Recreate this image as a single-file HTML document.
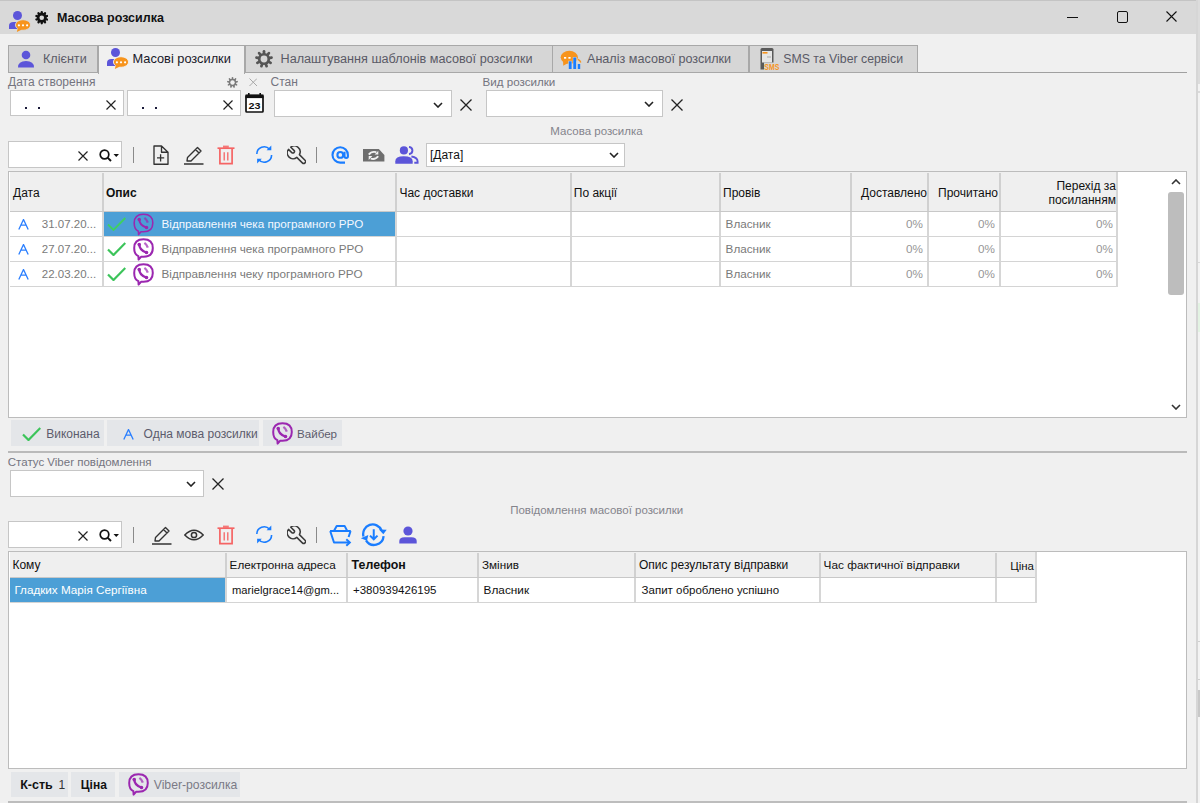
<!DOCTYPE html><html><head><meta charset="utf-8"><style>
*{box-sizing:border-box;margin:0;padding:0}
html,body{width:1200px;height:803px;overflow:hidden;background:#f0f0f0;font-family:"Liberation Sans", sans-serif;position:relative}
.t{position:absolute;white-space:nowrap;line-height:20px}
.r{position:absolute}
</style></head><body>
<div class="r" style="left:0px;top:0px;width:1196px;height:34px;background:#d9d9d9"></div>
<div class="r" style="left:0px;top:0px;width:1196px;height:1px;background:#c4c4c4"></div>
<div class="r" style="left:1198px;top:0px;width:2px;height:803px;background:#f3f3f3"></div>
<div class="r" style="left:1196px;top:0px;width:2px;height:803px;background:#d6d6d6"></div>
<div class="r" style="left:1198px;top:0px;width:2px;height:84px;background:#dcdcdc"></div>
<div class="r" style="left:1198px;top:91px;width:2px;height:2px;background:#dadada"></div>
<div class="r" style="left:1198px;top:262px;width:2px;height:1px;background:#d8d8d8"></div>
<div class="r" style="left:1198px;top:303px;width:2px;height:29px;background:#e3f3e3"></div>
<div class="r" style="left:1198px;top:641px;width:2px;height:1px;background:#d0d0d0"></div>
<div class="r" style="left:1198px;top:679px;width:2px;height:1px;background:#d0d0d0"></div>
<div class="r" style="left:1198px;top:690px;width:2px;height:27px;background:#c8c8c8"></div>
<svg class="r" style="left:9px;top:11px" width="23" height="22" viewBox="0 0 23 22"><circle cx="8.5" cy="4.5" r="4.5" fill="#5c55d9"/><path d="M0 18 L0 14.5 Q0 11 4.5 11 L9 11 L9 18 Z" fill="#5c55d9"/><ellipse cx="14" cy="14" rx="7.6" ry="5.3" fill="#f7941d" stroke="#d9d9d9" stroke-width="0.9"/><path d="M9 16.5 L7.8 21 L13 18.5 Z" fill="#f7941d"/><circle cx="9.9" cy="14.3" r="1.1" fill="#fff"/><circle cx="14" cy="14.3" r="1.1" fill="#fff"/><circle cx="18.1" cy="14.3" r="1.1" fill="#fff"/></svg>
<svg class="r" style="left:34.5px;top:11.2px" width="13.5" height="13.5" viewBox="0 0 13.5 13.5"><line x1="6.75" y1="6.75" x2="6.75" y2="1.15" stroke="#111" stroke-width="2.30" stroke-linecap="round"/><line x1="6.75" y1="6.75" x2="10.04" y2="2.22" stroke="#111" stroke-width="2.30" stroke-linecap="round"/><line x1="6.75" y1="6.75" x2="12.08" y2="5.02" stroke="#111" stroke-width="2.30" stroke-linecap="round"/><line x1="6.75" y1="6.75" x2="12.08" y2="8.48" stroke="#111" stroke-width="2.30" stroke-linecap="round"/><line x1="6.75" y1="6.75" x2="10.04" y2="11.28" stroke="#111" stroke-width="2.30" stroke-linecap="round"/><line x1="6.75" y1="6.75" x2="6.75" y2="12.35" stroke="#111" stroke-width="2.30" stroke-linecap="round"/><line x1="6.75" y1="6.75" x2="3.46" y2="11.28" stroke="#111" stroke-width="2.30" stroke-linecap="round"/><line x1="6.75" y1="6.75" x2="1.42" y2="8.48" stroke="#111" stroke-width="2.30" stroke-linecap="round"/><line x1="6.75" y1="6.75" x2="1.42" y2="5.02" stroke="#111" stroke-width="2.30" stroke-linecap="round"/><line x1="6.75" y1="6.75" x2="3.46" y2="2.22" stroke="#111" stroke-width="2.30" stroke-linecap="round"/><circle cx="6.75" cy="6.75" r="5.00" fill="#111"/><circle cx="6.75" cy="6.75" r="2.30" fill="#d9d9d9"/></svg>
<div class="t" style="left:57px;top:8.17px;font-size:12.5px;color:#111;font-weight:bold;">Масова розсилка</div>
<div class="r" style="left:1067px;top:17px;width:11px;height:1px;background:#111"></div>
<div class="r" style="left:1116.5px;top:11px;width:11.5px;height:11.5px;border:1.8px solid #111;border-radius:2px"></div>
<svg class="r" style="left:1166px;top:11px" width="11" height="11" viewBox="0 0 11 11"><path d="M0.5 0.5 L10.5 10.5 M10.5 0.5 L0.5 10.5" stroke="#111" stroke-width="1.1" fill="none"/></svg>
<div class="r" style="left:8px;top:72px;width:1179px;height:1px;background:#a0a0a0"></div>
<div class="r" style="left:8px;top:45px;width:90px;height:28px;background:#d6d6d6;border:1px solid #a8a8a8"></div>
<div class="r" style="left:98px;top:45px;width:147px;height:29px;background:#f0f0f0;border:1px solid #a8a8a8;border-bottom:none"></div>
<div class="r" style="left:245px;top:45px;width:308px;height:28px;background:#d6d6d6;border:1px solid #a8a8a8"></div>
<div class="r" style="left:552px;top:45px;width:197px;height:28px;background:#d6d6d6;border:1px solid #a8a8a8"></div>
<div class="r" style="left:749px;top:45px;width:169px;height:28px;background:#d6d6d6;border:1px solid #a8a8a8"></div>
<svg class="r" style="left:17px;top:50px" width="18" height="18" viewBox="0 0 18 18"><circle cx="9" cy="5" r="4.3" fill="#5c55d9"/><path d="M1 17.5 Q1 11 9 11 Q17 11 17 17.5 Z" fill="#5c55d9"/></svg>
<div class="t" style="left:43px;top:49.13px;font-size:12.6px;color:#5a5a66;font-weight:normal;">Клієнти</div>
<svg class="r" style="left:107px;top:48px" width="23" height="22" viewBox="0 0 23 22"><circle cx="8.5" cy="4.5" r="4.5" fill="#5c55d9"/><path d="M0 18 L0 14.5 Q0 11 4.5 11 L9 11 L9 18 Z" fill="#5c55d9"/><ellipse cx="14" cy="14" rx="7.6" ry="5.3" fill="#f7941d" stroke="#f0f0f0" stroke-width="0.9"/><path d="M9 16.5 L7.8 21 L13 18.5 Z" fill="#f7941d"/><circle cx="9.9" cy="14.3" r="1.1" fill="#fff"/><circle cx="14" cy="14.3" r="1.1" fill="#fff"/><circle cx="18.1" cy="14.3" r="1.1" fill="#fff"/></svg>
<div class="t" style="left:132.5px;top:49.06px;font-size:12.8px;color:#1a1a2a;font-weight:normal;">Масові розсилки</div>
<svg class="r" style="left:254.7px;top:49.6px" width="18" height="18" viewBox="0 0 18 18"><line x1="9.0" y1="9.0" x2="9.00" y2="1.35" stroke="#555" stroke-width="2.70" stroke-linecap="round"/><line x1="9.0" y1="9.0" x2="13.92" y2="3.14" stroke="#555" stroke-width="2.70" stroke-linecap="round"/><line x1="9.0" y1="9.0" x2="16.53" y2="7.67" stroke="#555" stroke-width="2.70" stroke-linecap="round"/><line x1="9.0" y1="9.0" x2="15.63" y2="12.82" stroke="#555" stroke-width="2.70" stroke-linecap="round"/><line x1="9.0" y1="9.0" x2="11.62" y2="16.19" stroke="#555" stroke-width="2.70" stroke-linecap="round"/><line x1="9.0" y1="9.0" x2="6.38" y2="16.19" stroke="#555" stroke-width="2.70" stroke-linecap="round"/><line x1="9.0" y1="9.0" x2="2.37" y2="12.83" stroke="#555" stroke-width="2.70" stroke-linecap="round"/><line x1="9.0" y1="9.0" x2="1.47" y2="7.67" stroke="#555" stroke-width="2.70" stroke-linecap="round"/><line x1="9.0" y1="9.0" x2="4.08" y2="3.14" stroke="#555" stroke-width="2.70" stroke-linecap="round"/><circle cx="9.0" cy="9.0" r="6.12" fill="#555"/><circle cx="9.0" cy="9.0" r="3.42" fill="#d6d6d6"/></svg>
<div class="t" style="left:280.5px;top:49.12px;font-size:12.65px;color:#5a5a66;font-weight:normal;">Налаштування шаблонів масової розсилки</div>
<div class="t" style="left:587px;top:49.13px;font-size:12.6px;color:#5a5a66;font-weight:normal;">Аналіз масової розсилки</div>
<div class="t" style="left:783.3px;top:49.24px;font-size:12.3px;color:#5a5a66;font-weight:normal;">SMS та Viber сервіси</div>
<svg class="r" style="left:560px;top:50px" width="22" height="20" viewBox="0 0 22 20"><ellipse cx="9.3" cy="7.3" rx="8.6" ry="6.5" fill="#f7941d"/><path d="M3 11 L3.3 15.8 L8 13 Z" fill="#f7941d"/><rect x="4" y="7" width="2.2" height="1.7" fill="#fff"/><rect x="8.4" y="7" width="2.2" height="1.7" fill="#fff"/><path d="M18 9.3 Q20.3 10.5 20.8 12.5" stroke="#f7941d" stroke-width="1.3" fill="none"/><rect x="8.3" y="10.8" width="3.8" height="8.7" fill="#d6d6d6"/><rect x="12.8" y="7" width="3.8" height="12.5" fill="#d6d6d6"/><rect x="8.8" y="11.3" width="2.8" height="7.7" fill="#1a7dff"/><rect x="13.3" y="7.5" width="2.8" height="11.5" fill="#1a7dff"/><rect x="17.8" y="14" width="2.4" height="5" fill="#1a7dff"/></svg>
<svg class="r" style="left:759px;top:47px" width="22" height="24" viewBox="0 0 22 24"><path d="M1.5 2.5 Q1.5 1 3 1 L13 1 Q14.5 1 14.5 2.5 L14.5 22.5 L1.5 22.5 Z" fill="#5a5a5a"/><rect x="3" y="4" width="10" height="11.5" fill="#e6e6e6"/><rect x="3.5" y="5" width="5" height="1.6" fill="#f7941d"/><rect x="8" y="9.5" width="4" height="1" fill="#aaa"/><rect x="5" y="15.5" width="16" height="8" fill="#d6d6d6"/><text x="5.3" y="23" font-family="Liberation Sans" font-weight="bold" font-size="9" fill="#f7941d" textLength="15" lengthAdjust="spacingAndGlyphs">SMS</text></svg>
<div class="t" style="left:8px;top:71.84px;font-size:12px;color:#74747f;font-weight:normal;">Дата створення</div>
<svg class="r" style="left:226.5px;top:76.5px" width="11" height="11" viewBox="0 0 11 11"><line x1="5.5" y1="5.5" x2="5.50" y2="0.83" stroke="#7a7a7a" stroke-width="1.65" stroke-linecap="round"/><line x1="5.5" y1="5.5" x2="8.51" y2="1.92" stroke="#7a7a7a" stroke-width="1.65" stroke-linecap="round"/><line x1="5.5" y1="5.5" x2="10.10" y2="4.69" stroke="#7a7a7a" stroke-width="1.65" stroke-linecap="round"/><line x1="5.5" y1="5.5" x2="9.55" y2="7.84" stroke="#7a7a7a" stroke-width="1.65" stroke-linecap="round"/><line x1="5.5" y1="5.5" x2="7.10" y2="9.89" stroke="#7a7a7a" stroke-width="1.65" stroke-linecap="round"/><line x1="5.5" y1="5.5" x2="3.90" y2="9.89" stroke="#7a7a7a" stroke-width="1.65" stroke-linecap="round"/><line x1="5.5" y1="5.5" x2="1.45" y2="7.84" stroke="#7a7a7a" stroke-width="1.65" stroke-linecap="round"/><line x1="5.5" y1="5.5" x2="0.90" y2="4.69" stroke="#7a7a7a" stroke-width="1.65" stroke-linecap="round"/><line x1="5.5" y1="5.5" x2="2.49" y2="1.92" stroke="#7a7a7a" stroke-width="1.65" stroke-linecap="round"/><circle cx="5.5" cy="5.5" r="3.74" fill="#7a7a7a"/><circle cx="5.5" cy="5.5" r="2.20" fill="#f0f0f0"/></svg>
<svg class="r" style="left:248.5px;top:78.3px" width="8.5" height="8.5" viewBox="0 0 8.5 8.5"><path d="M0.5 0.5 L8.0 8.0 M8.0 0.5 L0.5 8.0" stroke="#a8a8a8" stroke-width="1.0" fill="none"/></svg>
<div class="t" style="left:270.6px;top:71.84px;font-size:12px;color:#74747f;font-weight:normal;">Стан</div>
<div class="t" style="left:482.5px;top:71.98px;font-size:11.6px;color:#74747f;font-weight:normal;">Вид розсилки</div>
<div class="r" style="left:10px;top:90px;width:114px;height:26px;background:#fff;border:1px solid #c6c6c6"></div>
<div class="r" style="left:127px;top:90px;width:114px;height:26px;background:#fff;border:1px solid #c6c6c6"></div>
<div class="r" style="left:25px;top:107px;width:2px;height:2px;background:#1a1a3a"></div>
<div class="r" style="left:38px;top:107px;width:2px;height:2px;background:#1a1a3a"></div>
<div class="r" style="left:142px;top:107px;width:2px;height:2px;background:#1a1a3a"></div>
<div class="r" style="left:155px;top:107px;width:2px;height:2px;background:#1a1a3a"></div>
<svg class="r" style="left:106px;top:99.5px" width="10" height="10" viewBox="0 0 10 10"><path d="M0.5 0.5 L9.5 9.5 M9.5 0.5 L0.5 9.5" stroke="#222" stroke-width="1.2" fill="none"/></svg>
<svg class="r" style="left:223px;top:99.5px" width="10" height="10" viewBox="0 0 10 10"><path d="M0.5 0.5 L9.5 9.5 M9.5 0.5 L0.5 9.5" stroke="#222" stroke-width="1.2" fill="none"/></svg>
<svg class="r" style="left:245px;top:93px" width="19" height="20" viewBox="0 0 19 20"><rect x="1" y="2.5" width="17" height="16.5" rx="0.8" fill="#fff" stroke="#111" stroke-width="1.7"/><rect x="0.5" y="1.5" width="18" height="3.6" fill="#111"/><rect x="3" y="0" width="1.6" height="2" fill="#111"/><rect x="14.4" y="0" width="1.6" height="2" fill="#111"/><text x="9.6" y="16.2" font-family="Liberation Sans" font-weight="bold" font-size="9.6" text-anchor="middle" fill="#111" textLength="12" lengthAdjust="spacingAndGlyphs">23</text></svg>
<div class="r" style="left:274px;top:90px;width:178px;height:27px;background:#fff;border:1px solid #c6c6c6"></div>
<svg class="r" style="left:432.5px;top:101.5px" width="10" height="6" viewBox="0 0 10 6"><path d="M1 1 L5 5 L9 1" stroke="#222" stroke-width="1.6" fill="none"/></svg>
<svg class="r" style="left:460px;top:99px" width="12" height="12" viewBox="0 0 12 12"><path d="M0.5 0.5 L11.5 11.5 M11.5 0.5 L0.5 11.5" stroke="#222" stroke-width="1.3" fill="none"/></svg>
<div class="r" style="left:486px;top:90px;width:177px;height:27px;background:#fff;border:1px solid #c6c6c6"></div>
<svg class="r" style="left:644px;top:101px" width="10" height="6" viewBox="0 0 10 6"><path d="M1 1 L5 5 L9 1" stroke="#222" stroke-width="1.6" fill="none"/></svg>
<svg class="r" style="left:671px;top:99px" width="12" height="12" viewBox="0 0 12 12"><path d="M0.5 0.5 L11.5 11.5 M11.5 0.5 L0.5 11.5" stroke="#222" stroke-width="1.3" fill="none"/></svg>
<div class="t" style="left:296.5px;width:600px;text-align:center;top:121.02px;font-size:11.5px;color:#84848c;font-weight:normal;">Масова розсилка</div>
<div class="r" style="left:8px;top:141px;width:114px;height:27px;background:#fff;border:1px solid #c6c6c6"></div>
<svg class="r" style="left:78px;top:151px" width="10" height="10" viewBox="0 0 10 10"><path d="M0.5 0.5 L9.5 9.5 M9.5 0.5 L0.5 9.5" stroke="#222" stroke-width="1.2" fill="none"/></svg>
<svg class="r" style="left:99px;top:149px" width="21" height="13" viewBox="0 0 21 13"><circle cx="5.5" cy="5.5" r="4.3" stroke="#111" stroke-width="1.7" fill="none"/><path d="M8.6 8.6 L12 12" stroke="#111" stroke-width="1.9"/><path d="M14.5 5 L20 5 L17.25 8 Z" fill="#111"/></svg>
<div class="r" style="left:133px;top:147px;width:1px;height:16px;background:#8a8a8a"></div>
<svg class="r" style="left:153px;top:145px" width="16" height="20" viewBox="0 0 16 20"><path d="M1 1 L8.5 1 L15 7.2 L15 19.2 L1 19.2 Z M8.5 1 L8.5 7.2 L15 7.2" stroke="#333" stroke-width="1.35" fill="none" stroke-linejoin="round"/><path d="M7.6 9.3 L7.6 16.5 M4 12.9 L11.2 12.9" stroke="#333" stroke-width="1.3"/></svg>
<svg class="r" style="left:184px;top:145px" width="20" height="20" viewBox="0 0 20 20"><path d="M3 16 L3.5 12.5 L13.5 2.5 L17 6 L7 16 Z M11.5 4.5 L15 8" stroke="#333" stroke-width="1.4" fill="none" stroke-linejoin="round"/><path d="M0 19 L19.5 19" stroke="#333" stroke-width="1.5"/></svg>
<svg class="r" style="left:217px;top:145px" width="18" height="20" viewBox="0 0 18 20"><path d="M0.5 3.2 L17.5 3.2" stroke="#f56464" stroke-width="1.7"/><rect x="6" y="0.6" width="5.8" height="2.2" fill="#f56464" opacity="0.85"/><path d="M2.9 4 L2.9 18.6 L15.1 18.6 L15.1 4" stroke="#f56464" stroke-width="1.7" fill="none"/><path d="M7.2 7.2 L7.2 15.5 M10.8 7.2 L10.8 15.5" stroke="#f56464" stroke-width="1.3"/></svg>
<svg class="r" style="left:255px;top:145px" width="19" height="19" viewBox="0 0 19 19"><path d="M1.8 9 A7.3 7.3 0 0 1 14.6 4.3" stroke="#1a7dff" stroke-width="1.6" fill="none"/><path d="M16.6 10 A7.3 7.3 0 0 1 3.8 14.7" stroke="#1a7dff" stroke-width="1.6" fill="none"/><path d="M11.6 5.3 L16.3 5.3 L16.3 0.6 Z" fill="#1a7dff"/><path d="M6.8 13.7 L2.1 13.7 L2.1 18.4 Z" fill="#1a7dff"/></svg>
<svg class="r" style="left:286.5px;top:145.5px" width="19" height="19" viewBox="0 0 19 19"><path d="M3.8 1.2 L7 4.4 A1.5 1.5 0 0 1 4.8 6.6 L1.5 3.4 A5.8 5.8 0 0 0 9.8 11.4 L15.3 16.9 A1.9 1.9 0 0 0 18 14.2 L12.4 8.6 A5.8 5.8 0 0 0 3.8 1.2 Z" stroke="#3a3a3a" stroke-width="1.5" fill="none" stroke-linejoin="round"/></svg>
<div class="r" style="left:316px;top:147px;width:1px;height:16px;background:#8a8a8a"></div>
<svg class="r" style="left:331px;top:146px" width="19" height="18" viewBox="0 0 19 18"><path d="M14 16.6 L9.2 16.6 A7.7 7.7 0 1 1 16.9 8.9 L16.9 10.3 A1.7 1.7 0 0 1 13.5 10.3 L13.5 5.8" stroke="#1a7dff" stroke-width="2.1" fill="none"/><circle cx="9.3" cy="8.9" r="2.9" stroke="#1a7dff" stroke-width="2.1" fill="none"/></svg>
<svg class="r" style="left:363px;top:148.5px" width="22" height="13" viewBox="0 0 22 13"><path d="M0 0 L15.8 0 L21.4 5.9 L21.4 12.5 L0 12.5 Z" fill="#6e6e6e"/><path d="M5.8 5.6 Q8.5 1.9 13.3 3.2 M15.2 7.2 Q12.5 10.9 7.7 9.6" stroke="#f2f2f2" stroke-width="1.9" fill="none"/><path d="M11.6 5.6 L15.3 1.7 L15.3 5.6 Z M9.4 7.1 L5.7 11 L5.7 7.1 Z" fill="#f2f2f2"/></svg>
<svg class="r" style="left:395px;top:146px" width="24" height="19" viewBox="0 0 24 19"><path d="M14 0.9 A4.1 3.7 0 0 1 14 8.2" stroke="#5c55d9" stroke-width="1.9" fill="none"/><path d="M16.4 10.5 Q22.6 11.5 22.6 15.5 L22.6 16.8 L19.3 16.8" stroke="#5c55d9" stroke-width="1.9" fill="none"/><circle cx="8.9" cy="4.4" r="4.1" fill="#5c55d9"/><path d="M0.3 17.7 L0.3 15.2 Q0.3 10.2 8.7 10.2 Q17.7 10.2 17.7 15.2 L17.7 17.7 Z" fill="#5c55d9"/></svg>
<div class="r" style="left:426px;top:143px;width:199px;height:24px;background:#fff;border:1px solid #c6c6c6"></div>
<div class="t" style="left:430px;top:145.34px;font-size:12px;color:#111;font-weight:normal;">[Дата]</div>
<svg class="r" style="left:608.5px;top:152px" width="10" height="6" viewBox="0 0 10 6"><path d="M1 1 L5 5 L9 1" stroke="#222" stroke-width="1.6" fill="none"/></svg>
<div class="r" style="left:8px;top:171px;width:1179px;height:247px;background:#fff;border:1px solid #bcbcbc"></div>
<div class="r" style="left:10px;top:172px;width:1108px;height:40px;background:#efefef"></div>
<div class="r" style="left:10px;top:211px;width:1108px;height:1px;background:#c8c8c8"></div>
<div class="r" style="left:10px;top:236px;width:1108px;height:1px;background:#d4d4d4"></div>
<div class="r" style="left:10px;top:261px;width:1108px;height:1px;background:#d4d4d4"></div>
<div class="r" style="left:10px;top:286px;width:1108px;height:1px;background:#d4d4d4"></div>
<div class="r" style="left:102px;top:173px;width:2px;height:38px;background:#d0d0d0"></div>
<div class="r" style="left:102px;top:212px;width:2px;height:74px;background:#d6d6d6"></div>
<div class="r" style="left:395px;top:173px;width:2px;height:38px;background:#d0d0d0"></div>
<div class="r" style="left:395px;top:212px;width:2px;height:74px;background:#d6d6d6"></div>
<div class="r" style="left:570px;top:173px;width:2px;height:38px;background:#d0d0d0"></div>
<div class="r" style="left:570px;top:212px;width:2px;height:74px;background:#d6d6d6"></div>
<div class="r" style="left:719px;top:173px;width:2px;height:38px;background:#d0d0d0"></div>
<div class="r" style="left:719px;top:212px;width:2px;height:74px;background:#d6d6d6"></div>
<div class="r" style="left:850px;top:173px;width:2px;height:38px;background:#d0d0d0"></div>
<div class="r" style="left:850px;top:212px;width:2px;height:74px;background:#d6d6d6"></div>
<div class="r" style="left:927px;top:173px;width:2px;height:38px;background:#d0d0d0"></div>
<div class="r" style="left:927px;top:212px;width:2px;height:74px;background:#d6d6d6"></div>
<div class="r" style="left:999px;top:173px;width:2px;height:38px;background:#d0d0d0"></div>
<div class="r" style="left:999px;top:212px;width:2px;height:74px;background:#d6d6d6"></div>
<div class="r" style="left:1116px;top:172px;width:2px;height:115px;background:#d6d6d6"></div>
<div class="r" style="left:104px;top:212px;width:291px;height:24px;background:#4c9fd6"></div>
<div class="t" style="left:13px;top:182.84px;font-size:12px;color:#111;font-weight:normal;">Дата</div>
<div class="t" style="left:106px;top:182.84px;font-size:12px;color:#111;font-weight:bold;">Опис</div>
<div class="t" style="left:399.4px;top:182.84px;font-size:12px;color:#111;font-weight:normal;">Час доставки</div>
<div class="t" style="left:573.75px;top:182.84px;font-size:12px;color:#111;font-weight:normal;">По акції</div>
<div class="t" style="left:723px;top:182.84px;font-size:12px;color:#111;font-weight:normal;">Провів</div>
<div class="t" style="right:273px;top:182.84px;font-size:12px;color:#111;font-weight:normal;">Доставлено</div>
<div class="t" style="right:202px;top:182.84px;font-size:12px;color:#111;font-weight:normal;">Прочитано</div>
<div class="t" style="right:84px;top:175.84px;font-size:12px;color:#111;font-weight:normal;">Перехід за</div>
<div class="t" style="right:84px;top:189.84px;font-size:12px;color:#111;font-weight:normal;">посиланням</div>
<svg class="r" style="left:18px;top:219px" width="11" height="11" viewBox="0 0 11 11"><path d="M0.8 10.5 L5.5 0.5 L10.2 10.5 M2.9 6.2 L8.1 6.2" stroke="#2a7fff" stroke-width="1.3" fill="none"/></svg>
<div class="t" style="left:41.8px;top:214.32px;font-size:11.5px;color:#7a7a7a;font-weight:normal;">31.07.20...</div>
<svg class="r" style="left:107px;top:217px" width="19" height="14" viewBox="0 0 19 14"><path d="M1 7.5 L6.5 13 L18.3 1" stroke="#3fd060" stroke-width="1.8" fill="none"/></svg>
<svg class="r" style="left:132.5px;top:213px" width="21" height="23" viewBox="0 0 21 23"><path d="M10.5 1.2 C16.5 1.2 19.8 4.2 19.8 10 C19.8 15.8 16.5 18.8 10.5 18.8 L8 18.8 L5.6 21.6 L5.4 18.2 C2.6 17 1.2 14.3 1.2 10 C1.2 4.2 4.5 1.2 10.5 1.2 Z" stroke="#9b27b0" stroke-width="1.6" fill="none" stroke-linejoin="round"/><path d="M6.3 6.3 Q6.3 12.3 13.6 14.6" stroke="#9b27b0" stroke-width="2.0" fill="none" stroke-linecap="round"/><circle cx="6.2" cy="6.4" r="1.75" fill="#9b27b0"/><circle cx="13.5" cy="14.4" r="1.75" fill="#9b27b0"/><path d="M11.4 4.9 Q13.8 6.5 14.8 9.6" stroke="#9b27b0" stroke-width="2.3" fill="none" opacity="0.7"/></svg>
<div class="t" style="left:161.5px;top:214.25px;font-size:11.7px;color:#f4f8ff;font-weight:normal;">Відправлення чека програмного РРО</div>
<div class="t" style="left:725.6px;top:214.25px;font-size:11.7px;color:#7a7a7a;font-weight:normal;">Власник</div>
<div class="t" style="right:277px;top:214.25px;font-size:11.7px;color:#969696;font-weight:normal;">0%</div>
<div class="t" style="right:205px;top:214.25px;font-size:11.7px;color:#969696;font-weight:normal;">0%</div>
<div class="t" style="right:87px;top:214.25px;font-size:11.7px;color:#969696;font-weight:normal;">0%</div>
<svg class="r" style="left:18px;top:244px" width="11" height="11" viewBox="0 0 11 11"><path d="M0.8 10.5 L5.5 0.5 L10.2 10.5 M2.9 6.2 L8.1 6.2" stroke="#2a7fff" stroke-width="1.3" fill="none"/></svg>
<div class="t" style="left:41.8px;top:239.32px;font-size:11.5px;color:#7a7a7a;font-weight:normal;">27.07.20...</div>
<svg class="r" style="left:107px;top:242px" width="19" height="14" viewBox="0 0 19 14"><path d="M1 7.5 L6.5 13 L18.3 1" stroke="#3cc45a" stroke-width="2.2" fill="none"/></svg>
<svg class="r" style="left:132.5px;top:238px" width="21" height="23" viewBox="0 0 21 23"><path d="M10.5 1.2 C16.5 1.2 19.8 4.2 19.8 10 C19.8 15.8 16.5 18.8 10.5 18.8 L8 18.8 L5.6 21.6 L5.4 18.2 C2.6 17 1.2 14.3 1.2 10 C1.2 4.2 4.5 1.2 10.5 1.2 Z" stroke="#9b27b0" stroke-width="2" fill="none" stroke-linejoin="round"/><path d="M6.3 6.3 Q6.3 12.3 13.6 14.6" stroke="#9b27b0" stroke-width="2.4" fill="none" stroke-linecap="round"/><circle cx="6.2" cy="6.4" r="1.75" fill="#9b27b0"/><circle cx="13.5" cy="14.4" r="1.75" fill="#9b27b0"/><path d="M11.4 4.9 Q13.8 6.5 14.8 9.6" stroke="#9b27b0" stroke-width="2.3" fill="none" opacity="0.7"/></svg>
<div class="t" style="left:161.5px;top:239.25px;font-size:11.7px;color:#7a7a7a;font-weight:normal;">Відправлення чека програмного РРО</div>
<div class="t" style="left:725.6px;top:239.25px;font-size:11.7px;color:#7a7a7a;font-weight:normal;">Власник</div>
<div class="t" style="right:277px;top:239.25px;font-size:11.7px;color:#969696;font-weight:normal;">0%</div>
<div class="t" style="right:205px;top:239.25px;font-size:11.7px;color:#969696;font-weight:normal;">0%</div>
<div class="t" style="right:87px;top:239.25px;font-size:11.7px;color:#969696;font-weight:normal;">0%</div>
<svg class="r" style="left:18px;top:269px" width="11" height="11" viewBox="0 0 11 11"><path d="M0.8 10.5 L5.5 0.5 L10.2 10.5 M2.9 6.2 L8.1 6.2" stroke="#2a7fff" stroke-width="1.3" fill="none"/></svg>
<div class="t" style="left:41.8px;top:264.32px;font-size:11.5px;color:#7a7a7a;font-weight:normal;">22.03.20...</div>
<svg class="r" style="left:107px;top:267px" width="19" height="14" viewBox="0 0 19 14"><path d="M1 7.5 L6.5 13 L18.3 1" stroke="#3cc45a" stroke-width="2.2" fill="none"/></svg>
<svg class="r" style="left:132.5px;top:263px" width="21" height="23" viewBox="0 0 21 23"><path d="M10.5 1.2 C16.5 1.2 19.8 4.2 19.8 10 C19.8 15.8 16.5 18.8 10.5 18.8 L8 18.8 L5.6 21.6 L5.4 18.2 C2.6 17 1.2 14.3 1.2 10 C1.2 4.2 4.5 1.2 10.5 1.2 Z" stroke="#9b27b0" stroke-width="2" fill="none" stroke-linejoin="round"/><path d="M6.3 6.3 Q6.3 12.3 13.6 14.6" stroke="#9b27b0" stroke-width="2.4" fill="none" stroke-linecap="round"/><circle cx="6.2" cy="6.4" r="1.75" fill="#9b27b0"/><circle cx="13.5" cy="14.4" r="1.75" fill="#9b27b0"/><path d="M11.4 4.9 Q13.8 6.5 14.8 9.6" stroke="#9b27b0" stroke-width="2.3" fill="none" opacity="0.7"/></svg>
<div class="t" style="left:161.5px;top:264.25px;font-size:11.7px;color:#7a7a7a;font-weight:normal;">Відправлення чеку програмного РРО</div>
<div class="t" style="left:725.6px;top:264.25px;font-size:11.7px;color:#7a7a7a;font-weight:normal;">Власник</div>
<div class="t" style="right:277px;top:264.25px;font-size:11.7px;color:#969696;font-weight:normal;">0%</div>
<div class="t" style="right:205px;top:264.25px;font-size:11.7px;color:#969696;font-weight:normal;">0%</div>
<div class="t" style="right:87px;top:264.25px;font-size:11.7px;color:#969696;font-weight:normal;">0%</div>
<svg class="r" style="left:1171px;top:179px" width="10" height="6" viewBox="0 0 10 6"><path d="M1 5 L5 1 L9 5" stroke="#333" stroke-width="1.6" fill="none"/></svg>
<div class="r" style="left:1168px;top:192px;width:16px;height:103px;background:#bdbdbd;border-radius:3px"></div>
<svg class="r" style="left:1171px;top:404px" width="10" height="6" viewBox="0 0 10 6"><path d="M1 1 L5 5 L9 1" stroke="#333" stroke-width="1.6" fill="none"/></svg>
<div class="r" style="left:11px;top:420px;width:93px;height:26px;background:#e4e6e9"></div>
<div class="r" style="left:107px;top:420px;width:152px;height:26px;background:#e4e6e9"></div>
<div class="r" style="left:263px;top:420px;width:79px;height:26px;background:#e4e6e9"></div>
<svg class="r" style="left:22px;top:427px" width="19" height="14" viewBox="0 0 19 14"><path d="M1 7.5 L6.5 13 L18.3 1" stroke="#3cc45a" stroke-width="2.2" fill="none"/></svg>
<div class="t" style="left:46.2px;top:424.34px;font-size:12px;color:#5c5c6c;font-weight:normal;">Виконана</div>
<svg class="r" style="left:123px;top:429px" width="11" height="11" viewBox="0 0 11 11"><path d="M0.8 10.5 L5.5 0.5 L10.2 10.5 M2.9 6.2 L8.1 6.2" stroke="#2a7fff" stroke-width="1.3" fill="none"/></svg>
<div class="t" style="left:143.6px;top:424.34px;font-size:12px;color:#5c5c6c;font-weight:normal;">Одна мова розсилки</div>
<svg class="r" style="left:272px;top:422px" width="21" height="23" viewBox="0 0 21 23"><path d="M10.5 1.2 C16.5 1.2 19.8 4.2 19.8 10 C19.8 15.8 16.5 18.8 10.5 18.8 L8 18.8 L5.6 21.6 L5.4 18.2 C2.6 17 1.2 14.3 1.2 10 C1.2 4.2 4.5 1.2 10.5 1.2 Z" stroke="#9b27b0" stroke-width="2" fill="none" stroke-linejoin="round"/><path d="M6.3 6.3 Q6.3 12.3 13.6 14.6" stroke="#9b27b0" stroke-width="2.4" fill="none" stroke-linecap="round"/><circle cx="6.2" cy="6.4" r="1.75" fill="#9b27b0"/><circle cx="13.5" cy="14.4" r="1.75" fill="#9b27b0"/><path d="M11.4 4.9 Q13.8 6.5 14.8 9.6" stroke="#9b27b0" stroke-width="2.3" fill="none" opacity="0.7"/></svg>
<div class="t" style="left:297px;top:424.48px;font-size:11.6px;color:#5c5c6c;font-weight:normal;">Вайбер</div>
<div class="r" style="left:8px;top:451px;width:1179px;height:2px;background:#bababa"></div>
<div class="t" style="left:7.8px;top:451.52px;font-size:11.5px;color:#74747f;font-weight:normal;">Статус Viber повідомлення</div>
<div class="r" style="left:10px;top:470px;width:194px;height:27px;background:#fff;border:1px solid #c6c6c6"></div>
<svg class="r" style="left:186px;top:481px" width="10" height="6" viewBox="0 0 10 6"><path d="M1 1 L5 5 L9 1" stroke="#222" stroke-width="1.6" fill="none"/></svg>
<svg class="r" style="left:212px;top:478px" width="12" height="12" viewBox="0 0 12 12"><path d="M0.5 0.5 L11.5 11.5 M11.5 0.5 L0.5 11.5" stroke="#222" stroke-width="1.3" fill="none"/></svg>
<div class="t" style="left:296.70000000000005px;width:600px;text-align:center;top:499.82px;font-size:11.5px;color:#84848c;font-weight:normal;">Повідомлення масової розсилки</div>
<div class="r" style="left:8px;top:521px;width:114px;height:27px;background:#fff;border:1px solid #c6c6c6"></div>
<svg class="r" style="left:78px;top:531px" width="10" height="10" viewBox="0 0 10 10"><path d="M0.5 0.5 L9.5 9.5 M9.5 0.5 L0.5 9.5" stroke="#222" stroke-width="1.2" fill="none"/></svg>
<svg class="r" style="left:99px;top:529px" width="21" height="13" viewBox="0 0 21 13"><circle cx="5.5" cy="5.5" r="4.3" stroke="#111" stroke-width="1.7" fill="none"/><path d="M8.6 8.6 L12 12" stroke="#111" stroke-width="1.9"/><path d="M14.5 5 L20 5 L17.25 8 Z" fill="#111"/></svg>
<div class="r" style="left:133px;top:527px;width:1px;height:16px;background:#8a8a8a"></div>
<svg class="r" style="left:152px;top:525px" width="20" height="20" viewBox="0 0 20 20"><path d="M3 16 L3.5 12.5 L13.5 2.5 L17 6 L7 16 Z M11.5 4.5 L15 8" stroke="#333" stroke-width="1.4" fill="none" stroke-linejoin="round"/><path d="M0 19 L19.5 19" stroke="#333" stroke-width="1.5"/></svg>
<svg class="r" style="left:184px;top:529px" width="20" height="12" viewBox="0 0 20 12"><path d="M0.8 6 Q10 -3.5 19.2 6 Q10 15.5 0.8 6 Z" stroke="#333" stroke-width="1.5" fill="none"/><circle cx="10" cy="6" r="2.6" stroke="#333" stroke-width="1.5" fill="none"/></svg>
<svg class="r" style="left:217px;top:525px" width="18" height="20" viewBox="0 0 18 20"><path d="M0.5 3.2 L17.5 3.2" stroke="#f56464" stroke-width="1.7"/><rect x="6" y="0.6" width="5.8" height="2.2" fill="#f56464" opacity="0.85"/><path d="M2.9 4 L2.9 18.6 L15.1 18.6 L15.1 4" stroke="#f56464" stroke-width="1.7" fill="none"/><path d="M7.2 7.2 L7.2 15.5 M10.8 7.2 L10.8 15.5" stroke="#f56464" stroke-width="1.3"/></svg>
<svg class="r" style="left:255px;top:525px" width="19" height="19" viewBox="0 0 19 19"><path d="M1.8 9 A7.3 7.3 0 0 1 14.6 4.3" stroke="#1a7dff" stroke-width="1.6" fill="none"/><path d="M16.6 10 A7.3 7.3 0 0 1 3.8 14.7" stroke="#1a7dff" stroke-width="1.6" fill="none"/><path d="M11.6 5.3 L16.3 5.3 L16.3 0.6 Z" fill="#1a7dff"/><path d="M6.8 13.7 L2.1 13.7 L2.1 18.4 Z" fill="#1a7dff"/></svg>
<svg class="r" style="left:286.5px;top:525.5px" width="19" height="19" viewBox="0 0 19 19"><path d="M3.8 1.2 L7 4.4 A1.5 1.5 0 0 1 4.8 6.6 L1.5 3.4 A5.8 5.8 0 0 0 9.8 11.4 L15.3 16.9 A1.9 1.9 0 0 0 18 14.2 L12.4 8.6 A5.8 5.8 0 0 0 3.8 1.2 Z" stroke="#3a3a3a" stroke-width="1.5" fill="none" stroke-linejoin="round"/></svg>
<div class="r" style="left:316px;top:527px;width:1px;height:16px;background:#8a8a8a"></div>
<svg class="r" style="left:329px;top:524px" width="24" height="23" viewBox="0 0 24 23"><path d="M5.2 6.5 L7.7 1.9 L15.6 1.9 L18 6.5 M1 6.9 L21.8 6.9 M1.2 7 L5 18.5 L20 18.5 M21.6 7 L19.6 13" stroke="#1a7dff" stroke-width="2" fill="none" stroke-linejoin="round"/><path d="M17.3 15.3 L20.8 18.5 L17.3 21.7" stroke="#1a7dff" stroke-width="2" fill="none"/></svg>
<svg class="r" style="left:360px;top:523px" width="28" height="24" viewBox="0 0 28 24"><path d="M3.5 13.5 A9.5 9.5 0 0 1 21.5 7.5" stroke="#1a7dff" stroke-width="2.3" fill="none"/><path d="M23.6 13.2 A9.5 9.5 0 0 1 6 17.3" stroke="#1a7dff" stroke-width="2.3" fill="none"/><path d="M19 6.5 L26.7 6.7 L23.3 11.2 Z" fill="#1a7dff"/><path d="M0.8 15.2 L8.3 12.1 L7 17.8 Z" fill="#1a7dff"/><path d="M13.75 6.2 L13.75 15.5 M10 12.6 L13.75 16.3 L17.5 12.6" stroke="#1a7dff" stroke-width="2" fill="none"/></svg>
<svg class="r" style="left:398.5px;top:525.5px" width="18" height="18" viewBox="0 0 18 18"><circle cx="9" cy="5" r="4.6" fill="#5c55d9"/><path d="M0.3 17.5 L0.3 15 Q0.3 11.2 5.5 11.2 L12.5 11.2 Q17.7 11.2 17.7 15 L17.7 17.5 Z" fill="#5c55d9"/></svg>
<div class="r" style="left:8px;top:551px;width:1179px;height:218px;background:#fff;border:1px solid #bcbcbc"></div>
<div class="r" style="left:10px;top:552px;width:1027px;height:25px;background:#efefef"></div>
<div class="r" style="left:10px;top:577px;width:1027px;height:1px;background:#c8c8c8"></div>
<div class="r" style="left:10px;top:602px;width:1027px;height:1px;background:#d4d4d4"></div>
<div class="r" style="left:225px;top:553px;width:2px;height:24px;background:#d0d0d0"></div>
<div class="r" style="left:225px;top:578px;width:2px;height:24px;background:#d6d6d6"></div>
<div class="r" style="left:346px;top:553px;width:2px;height:24px;background:#d0d0d0"></div>
<div class="r" style="left:346px;top:578px;width:2px;height:24px;background:#d6d6d6"></div>
<div class="r" style="left:477px;top:553px;width:2px;height:24px;background:#d0d0d0"></div>
<div class="r" style="left:477px;top:578px;width:2px;height:24px;background:#d6d6d6"></div>
<div class="r" style="left:634px;top:553px;width:2px;height:24px;background:#d0d0d0"></div>
<div class="r" style="left:634px;top:578px;width:2px;height:24px;background:#d6d6d6"></div>
<div class="r" style="left:819px;top:553px;width:2px;height:24px;background:#d0d0d0"></div>
<div class="r" style="left:819px;top:578px;width:2px;height:24px;background:#d6d6d6"></div>
<div class="r" style="left:995px;top:553px;width:2px;height:24px;background:#d0d0d0"></div>
<div class="r" style="left:995px;top:578px;width:2px;height:24px;background:#d6d6d6"></div>
<div class="r" style="left:1035px;top:552px;width:2px;height:51px;background:#d6d6d6"></div>
<div class="r" style="left:10px;top:578px;width:215px;height:24px;background:#4c9fd6"></div>
<div class="t" style="left:12.4px;top:555.34px;font-size:12px;color:#111;font-weight:normal;">Кому</div>
<div class="t" style="left:229.6px;top:555.45px;font-size:11.7px;color:#111;font-weight:normal;">Електронна адреса</div>
<div class="t" style="left:351.6px;top:555.20px;font-size:12.4px;color:#111;font-weight:bold;">Телефон</div>
<div class="t" style="left:482px;top:555.45px;font-size:11.7px;color:#111;font-weight:normal;">Змінив</div>
<div class="t" style="left:639px;top:555.34px;font-size:12px;color:#111;font-weight:normal;">Опис результату відправки</div>
<div class="t" style="left:823.6px;top:555.41px;font-size:11.8px;color:#111;font-weight:normal;">Час фактичної відправки</div>
<div class="t" style="right:166px;top:555.52px;font-size:11.5px;color:#111;font-weight:normal;">Ціна</div>
<div class="t" style="left:14.4px;top:579.95px;font-size:11.7px;color:#fff;font-weight:normal;">Гладких Марія Сергіївна</div>
<div class="t" style="left:232px;top:580.12px;font-size:11.2px;color:#111;font-weight:normal;">marielgrace14@gm...</div>
<div class="t" style="left:353px;top:580.02px;font-size:11.5px;color:#111;font-weight:normal;">+380939426195</div>
<div class="t" style="left:483.6px;top:579.91px;font-size:11.8px;color:#111;font-weight:normal;">Власник</div>
<div class="t" style="left:641.6px;top:580.02px;font-size:11.5px;color:#111;font-weight:normal;">Запит оброблено успішно</div>
<div class="r" style="left:11px;top:772px;width:57px;height:25px;background:#e4e6e9"></div>
<div class="r" style="left:71px;top:772px;width:44px;height:25px;background:#e4e6e9"></div>
<div class="r" style="left:119px;top:772px;width:121px;height:25px;background:#e4e6e9"></div>
<div class="t" style="left:20.2px;top:774.87px;font-size:12.5px;color:#111;font-weight:bold;">К-сть</div>
<div class="t" style="left:58.5px;top:775.04px;font-size:12px;color:#333;font-weight:normal;">1</div>
<div class="t" style="left:80.8px;top:775.04px;font-size:12px;color:#111;font-weight:bold;">Ціна</div>
<svg class="r" style="left:128px;top:773px" width="21" height="23" viewBox="0 0 21 23"><path d="M10.5 1.2 C16.5 1.2 19.8 4.2 19.8 10 C19.8 15.8 16.5 18.8 10.5 18.8 L8 18.8 L5.6 21.6 L5.4 18.2 C2.6 17 1.2 14.3 1.2 10 C1.2 4.2 4.5 1.2 10.5 1.2 Z" stroke="#9b27b0" stroke-width="2" fill="none" stroke-linejoin="round"/><path d="M6.3 6.3 Q6.3 12.3 13.6 14.6" stroke="#9b27b0" stroke-width="2.4" fill="none" stroke-linecap="round"/><circle cx="6.2" cy="6.4" r="1.75" fill="#9b27b0"/><circle cx="13.5" cy="14.4" r="1.75" fill="#9b27b0"/><path d="M11.4 4.9 Q13.8 6.5 14.8 9.6" stroke="#9b27b0" stroke-width="2.3" fill="none" opacity="0.7"/></svg>
<div class="t" style="left:153.75px;top:774.97px;font-size:12.2px;color:#7a7a86;font-weight:normal;">Viber-розсилка</div>
<div class="r" style="left:8px;top:801px;width:1179px;height:2px;background:#bdbdbd"></div>
</body></html>
